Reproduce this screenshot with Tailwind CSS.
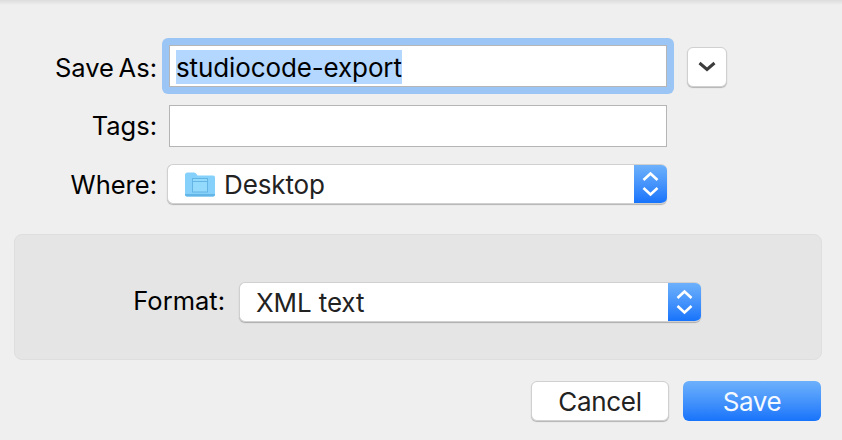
<!doctype html>
<html><head><meta charset="utf-8"><script src="https://cdn.jsdelivr.net/npm/@tailwindcss/browser@4"></script></head>
<body class="bg-[#efefef]">
<div class="w-[842px] h-[440px] overflow-hidden bg-[#efefef] text-[26px] leading-[32px] tracking-[-0.12px] text-[#0c0c0c] font-['Inter','Liberation_Sans',sans-serif]">
  <div class="h-[5px] bg-gradient-to-b from-[#dcdcdc] to-[#efefef]"></div>

  <div class="flex items-center mt-[33px] h-[56px]">
    <label class="w-[158px] pr-[1px] text-right text-[25.5px] tracking-normal [word-spacing:-2.5px] text-black pt-[4px]">Save As:</label>
    <div class="ml-[4px] w-[512px] h-[56px] p-[7px] rounded-[6px] bg-[#9ac5f4]">
      <div class="h-[42px] bg-white border border-[#b5b5b5] pl-[6px] pt-[4px]">
        <span class="block w-fit h-[34px] bg-[#b3d7ff] leading-[36px] text-black">studiocode-export</span>
      </div>
    </div>
    <button class="ml-[13px] self-start mt-[9px] w-[40px] h-[40px] flex items-center justify-center bg-white rounded-[6px] border border-[#d0d0d0] shadow-[0_1px_1px_rgba(0,0,0,0.25)]">
      <svg width="18" height="12" viewBox="0 0 18 12" fill="none" stroke="#3c3c3c" stroke-width="3"><path d="M1.5 2l7.5 6.5 7.5-6.5"/></svg>
    </button>
  </div>

  <div class="flex items-center mt-[11px] h-[42px]">
    <label class="w-[158px] pr-[1px] text-right text-[25.5px] tracking-normal text-black">Tags:</label>
    <div class="ml-[11px] w-[498px] h-[42px] bg-white border border-[#b5b5b5]"></div>
  </div>

  <div class="flex items-center mt-[17px] h-[40px]">
    <label class="w-[158px] pr-[1px] text-right text-[25.5px] tracking-normal text-black pt-[2px]">Where:</label>
    <div class="ml-[9px] w-[500px] h-[40px] flex bg-white rounded-[6px] border border-[#d0d0d0] border-r-0 shadow-[0_1px_1px_rgba(0,0,0,0.25)] overflow-hidden">
      <div class="flex-1 flex items-center pl-[17px] text-[#222]">
        <svg width="30" height="25" viewBox="0 0 30 25" class="mr-[9px]">
          <path d="M0 3Q0 0.5 2.5 0.5H9Q10.5 0.5 11.5 2L12.5 3.5H28Q30 3.5 30 5.5V22.5Q30 24.5 28 24.5H2Q0 24.5 0 22.5Z" fill="#86d1fb"/>
          <path d="M0 22.5Q0 24.5 2 24.5H28Q30 24.5 30 22.5V22H0Z" fill="#62b5e6"/>
          <rect x="7.5" y="6.5" width="15" height="13.5" fill="#93dafd" stroke="#64b4e4" stroke-width="1"/>
          <path d="M7.5 9.5H22.5" stroke="#64b4e4" stroke-width="1"/>
        </svg>
        <span class="pt-[2px]">Desktop</span>
      </div>
      <div class="w-[33px] flex items-center justify-center bg-gradient-to-b from-[#6db1fb] to-[#1673fb]">
        <svg width="17" height="26" viewBox="0 0 17 26" fill="none" stroke="#fff" stroke-width="2.6"><path d="M1.5 9l7-6.5 7 6.5M1.5 17l7 6.5 7-6.5"/></svg>
      </div>
    </div>
  </div>

  <div class="flex items-center mt-[30px] ml-[14px] w-[808px] h-[126px] pt-[10px] bg-[#e5e5e5] border border-[#dedede] rounded-[8px] box-border">
    <label class="w-[210px] text-right text-[25.5px] tracking-normal text-black pb-[2px]">Format:</label>
    <div class="ml-[14px] w-[462px] h-[40px] flex bg-white rounded-[6px] border border-[#d0d0d0] border-r-0 shadow-[0_1px_1px_rgba(0,0,0,0.25)] overflow-hidden">
      <div class="flex-1 flex items-center pl-[16px] text-[#222]"><span class="pt-[2px]">XML text</span></div>
      <div class="w-[33px] flex items-center justify-center bg-gradient-to-b from-[#6db1fb] to-[#1673fb]">
        <svg width="17" height="26" viewBox="0 0 17 26" fill="none" stroke="#fff" stroke-width="2.6"><path d="M1.5 9l7-6.5 7 6.5M1.5 17l7 6.5 7-6.5"/></svg>
      </div>
    </div>
  </div>

  <div class="flex justify-end gap-[14px] mt-[21px] pr-[21px]">
    <button class="w-[138px] h-[40px] bg-white rounded-[6px] border border-[#d0d0d0] shadow-[0_1px_1px_rgba(0,0,0,0.25)] text-[#222] tracking-[-0.3px] pt-[1px]">Cancel</button>
    <button class="w-[138px] h-[40px] rounded-[6px] bg-gradient-to-b from-[#6db1fb] to-[#1673fb] text-[#f4f8ff] tracking-[-0.4px] pt-[1px]">Save</button>
  </div>
</div>
</body></html>
